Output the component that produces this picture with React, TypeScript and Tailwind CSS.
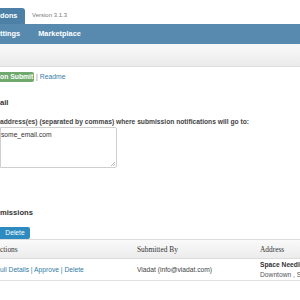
export default function App() {
  return (
    <div className="w-[300px] h-[300px] overflow-hidden bg-white font-['Liberation_Sans',Arial,sans-serif] text-[#333]">
      {/* title tabs */}
      <div className="h-[24px] flex items-end">
        <div className="h-[16px] w-[25px] bg-[#4d80a6] rounded-tr-[3px] flex items-center text-white font-bold text-[7.3px]">
          dons
        </div>
        <span className="ml-[7px] mb-[4px] text-[6px] text-[#777]">Version 3.1.3</span>
      </div>
      <div className="h-[20px] bg-[#588ab0] flex items-center text-white font-bold text-[7.4px]">
        <span>ttings</span>
        <span className="ml-[18px]">Marketplace</span>
      </div>
      <div className="h-[2px] bg-[#f4f6f8]" />
      <div className="h-[21px] bg-gradient-to-b from-[#f8f8f8] to-[#ebebeb] border-b border-[#dedede]" />

      {/* sub links */}
      <div className="mt-[5px] flex items-center text-[6.8px]">
        <span className="h-[10px] w-[34px] bg-[#6fa96d] rounded-r-[2px] text-white font-bold flex items-center">
          on Submit
        </span>
        <span className="ml-[2px] text-[#8a8a8a]">|</span>
        <span className="ml-[2px] text-[#3b7ea8]">Readme</span>
      </div>

      {/* email settings */}
      <div className="mt-[16px] font-bold text-[7.6px] leading-[10px]">ail</div>
      <div className="mt-[10px] font-bold text-[6.7px] leading-[8px] text-[#444] whitespace-nowrap">
        address(es) (separated by commas) where submission notifications will go to:
      </div>
      <div className="relative mt-[1px] w-[117px] h-[41px] border border-[#cfcfcf] rounded-r-[2px] bg-white text-[6.7px] pt-[2px] text-[#333]">
        some_email.com
        <svg className="absolute right-[1px] bottom-[1px]" width="5" height="5" viewBox="0 0 5 5">
          <path d="M1 5 L5 1 M3 5 L5 3" stroke="#999" strokeWidth="0.7" />
        </svg>
      </div>

      {/* submissions */}
      <div className="mt-[40px] font-bold text-[7.6px] leading-[10px]">missions</div>
      <div className="mt-[9px] h-[12px] w-[30px] bg-[#2d8bbf] rounded-r-[2px] text-white text-[6.7px] flex items-center justify-center">
        Delete
      </div>

      <div className="border-t border-[#dcdcdc]">
        <div className="h-[19px] grid grid-cols-[137px_123px_1fr] items-center bg-gradient-to-b from-[#fafafa] to-[#ececec] border-b border-[#dcdcdc] font-['Liberation_Serif',Georgia,serif] text-[7.4px] text-[#333]">
          <span>ctions</span>
          <span>Submitted By</span>
          <span>Address</span>
        </div>
        <div className="h-[22px] grid grid-cols-[137px_123px_1fr] items-center border-b border-[#e2e2e2] text-[6.7px] whitespace-nowrap">
          <span className="text-[#2f7aa5]">ull Details | Approve | Delete</span>
          <span className="text-[#444]">Viadat (info@viadat.com)</span>
          <div className="leading-[10px] overflow-hidden">
            <div className="font-bold text-[#333]">Space Needle</div>
            <div className="text-[#555]">Downtown , Seattle</div>
          </div>
        </div>
      </div>
    </div>
  );
}
